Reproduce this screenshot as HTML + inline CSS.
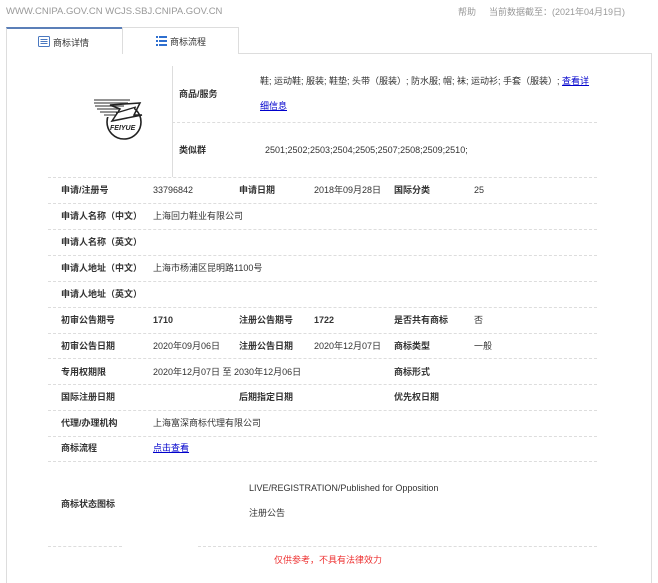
<!DOCTYPE html>
<html><head><meta charset="utf-8"><style>
body{margin:0;width:658px;height:573px;background:#fff;font-family:"Liberation Sans","Noto Sans CJK SC",sans-serif;font-size:9px;color:#333;position:relative;overflow:hidden}
.a{position:absolute;white-space:nowrap;line-height:12px}
.b{font-weight:bold;color:#333}
.g{color:#999}
.d{position:absolute;height:0;border-top:1px dashed #ddd}
a{color:#00c;text-decoration:underline}
</style></head><body>
<div class="a g" style="left:6px;top:6px;font-size:9.5px">WWW.CNIPA.GOV.CN WCJS.SBJ.CNIPA.GOV.CN</div>
<div class="a g" style="left:458px;top:6px">帮助</div>
<div class="a g" style="left:489px;top:6px">当前数据截至：(2021年04月19日)</div>
<!-- tabs -->
<div style="position:absolute;left:6px;top:27px;width:116px;height:26px;border-top:2px solid #5b7fb8;border-left:1px solid #ddd;box-sizing:border-box;background:#fff"></div>
<div style="position:absolute;left:122px;top:27px;width:117px;height:27px;border:1px solid #ddd;border-bottom:none;box-sizing:border-box;background:#fff"></div>
<div style="position:absolute;left:239px;top:53px;width:413px;border-top:1px solid #ddd"></div>
<div style="position:absolute;left:6px;top:53px;width:646px;height:530px;border-left:1px solid #ddd;border-right:1px solid #ddd;box-sizing:border-box"></div>
<svg style="position:absolute;left:38px;top:36px" width="12" height="11"><rect x="0.5" y="0.5" width="11" height="10" rx="1" fill="#fff" stroke="#4a78c0"/><rect x="2.5" y="3" width="7" height="1" fill="#4a78c0"/><rect x="2.5" y="5" width="7" height="1" fill="#4a78c0"/><rect x="2.5" y="7" width="7" height="1" fill="#4a78c0"/></svg>
<div class="a" style="left:53px;top:37px">商标详情</div>
<svg style="position:absolute;left:156px;top:36px" width="11" height="10"><rect x="0" y="0" width="2" height="2" fill="#2e6fcf"/><rect x="3" y="0" width="8" height="2" fill="#2e6fcf"/><rect x="0" y="4" width="2" height="2" fill="#2e6fcf"/><rect x="3" y="4" width="8" height="2" fill="#2e6fcf"/><rect x="0" y="8" width="2" height="2" fill="#2e6fcf"/><rect x="3" y="8" width="8" height="2" fill="#2e6fcf"/></svg>
<div class="a" style="left:170px;top:36px">商标流程</div>
<!-- logo -->
<svg style="position:absolute;left:90px;top:97px" width="56" height="46" viewBox="0 0 56 46">
<circle cx="34" cy="25" r="17" fill="none" stroke="#222" stroke-width="1.6"/>
<rect x="0" y="0" width="44" height="20" fill="#fff"/>
<g stroke="#555" stroke-width="1.2" fill="none">
<path d="M4 3 H40"/><path d="M4 6 H38"/><path d="M5 9 H34"/><path d="M7 12 H30"/><path d="M10 15 H27"/><path d="M14 18 H26"/>
</g>
<path d="M20 8 L50 6 L44 18 L52 18 L22 24 L30 12 Z" fill="none" stroke="#222" stroke-width="1.5"/>
<path d="M26 16 L46 10" stroke="#222" stroke-width="1.3"/>
<text x="20" y="33" font-size="7" font-style="italic" font-weight="bold" fill="#222" font-family="Liberation Sans">FEIYUE</text>
</svg>
<div style="position:absolute;left:172px;top:66px;height:111px;border-left:1px solid #ddd"></div>
<div class="a b" style="left:179px;top:88px">商品/服务</div>
<div class="a" style="left:260px;top:75px">鞋; 运动鞋; 服装; 鞋垫; 头带（服装）; 防水服; 帽; 袜; 运动衫; 手套（服装）; <a>查看详</a></div>
<div class="a" style="left:260px;top:100px"><a>细信息</a></div>
<div class="d" style="left:172px;top:122px;width:425px"></div>
<div class="a b" style="left:179px;top:144px">类似群</div>
<div class="a" style="left:265px;top:144px">2501;2502;2503;2504;2505;2507;2508;2509;2510;</div>
<div class="d" style="left:48px;top:177px;width:549px"></div>
<!-- rows -->
<div class="a b" style="left:61px;top:184px">申请/注册号</div><div class="a" style="left:153px;top:184px">33796842</div>
<div class="a b" style="left:239px;top:184px">申请日期</div><div class="a" style="left:314px;top:184px">2018年09月28日</div>
<div class="a b" style="left:394px;top:184px">国际分类</div><div class="a" style="left:474px;top:184px">25</div>
<div class="d" style="left:48px;top:203px;width:549px"></div>
<div class="a b" style="left:61px;top:210px">申请人名称（中文）</div><div class="a" style="left:153px;top:210px">上海回力鞋业有限公司</div>
<div class="d" style="left:48px;top:229px;width:549px"></div>
<div class="a b" style="left:61px;top:236px">申请人名称（英文）</div>
<div class="d" style="left:48px;top:255px;width:549px"></div>
<div class="a b" style="left:61px;top:262px">申请人地址（中文）</div><div class="a" style="left:153px;top:262px">上海市杨浦区昆明路1100号</div>
<div class="d" style="left:48px;top:281px;width:549px"></div>
<div class="a b" style="left:61px;top:288px">申请人地址（英文）</div>
<div class="d" style="left:48px;top:307px;width:549px"></div>
<div class="a b" style="left:61px;top:314px">初审公告期号</div><div class="a b" style="left:153px;top:314px">1710</div>
<div class="a b" style="left:239px;top:314px">注册公告期号</div><div class="a b" style="left:314px;top:314px">1722</div>
<div class="a b" style="left:394px;top:314px">是否共有商标</div><div class="a" style="left:474px;top:314px">否</div>
<div class="d" style="left:48px;top:333px;width:549px"></div>
<div class="a b" style="left:61px;top:340px">初审公告日期</div><div class="a" style="left:153px;top:340px">2020年09月06日</div>
<div class="a b" style="left:239px;top:340px">注册公告日期</div><div class="a" style="left:314px;top:340px">2020年12月07日</div>
<div class="a b" style="left:394px;top:340px">商标类型</div><div class="a" style="left:474px;top:340px">一般</div>
<div class="d" style="left:48px;top:358px;width:549px"></div>
<div class="a b" style="left:61px;top:366px">专用权期限</div><div class="a" style="left:153px;top:366px">2020年12月07日 至 2030年12月06日</div>
<div class="a b" style="left:394px;top:366px">商标形式</div>
<div class="d" style="left:48px;top:384px;width:549px"></div>
<div class="a b" style="left:61px;top:391px">国际注册日期</div>
<div class="a b" style="left:239px;top:391px">后期指定日期</div>
<div class="a b" style="left:394px;top:391px">优先权日期</div>
<div class="d" style="left:48px;top:410px;width:549px"></div>
<div class="a b" style="left:61px;top:417px">代理/办理机构</div><div class="a" style="left:153px;top:417px">上海富深商标代理有限公司</div>
<div class="d" style="left:48px;top:436px;width:549px"></div>
<div class="a b" style="left:61px;top:442px">商标流程</div><div class="a" style="left:153px;top:442px"><a>点击查看</a></div>
<div class="d" style="left:48px;top:461px;width:549px"></div>
<div class="a b" style="left:61px;top:498px">商标状态图标</div>
<div class="a" style="left:249px;top:482px">LIVE/REGISTRATION/Published for Opposition</div>
<div class="a" style="left:249px;top:507px">注册公告</div>
<div class="d" style="left:48px;top:546px;width:74px"></div>
<div class="d" style="left:198px;top:546px;width:399px"></div>
<div class="a" style="left:274px;top:554px;color:#e33">仅供参考，不具有法律效力</div>
</body></html>
